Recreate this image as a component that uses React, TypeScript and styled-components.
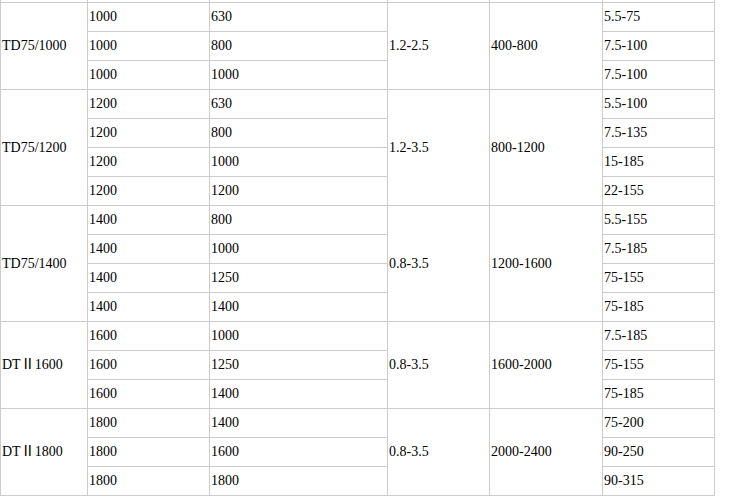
import React from "react";
import styled, { createGlobalStyle } from "styled-components";

const GlobalStyle = createGlobalStyle`
  html, body {
    margin: 0;
    padding: 0;
    background: #ffffff;
  }
  body {
    font-family: "Liberation Serif", "Noto Sans CJK SC", serif;
    font-size: 14px;
    color: #000000;
    overflow: hidden;
  }
`;

const Page = styled.div`
  width: 732px;
  height: 501px;
  overflow: hidden;
`;

const Table = styled.table`
  border-collapse: collapse;
  table-layout: fixed;
  width: 714px;
  margin-top: -27px;
  font-family: "Liberation Serif", "Noto Sans CJK SC", serif;
  font-size: 14px;
  color: #000;
`;

const Cell = styled.td`
  border: 1px solid #cccccc;
  padding: 0 1px;
  height: 28px;
  line-height: 16px;
  text-align: left;
  vertical-align: middle;
  white-space: nowrap;
`;

type Group = {
  model: string;
  speed: string;
  capacity: string;
  rows: [string, string, string][];
};

const groups: Group[] = [
  {
    model: "TD75/1000",
    speed: "1.2-2.5",
    capacity: "400-800",
    rows: [
      ["1000", "630", "5.5-75"],
      ["1000", "800", "7.5-100"],
      ["1000", "1000", "7.5-100"],
    ],
  },
  {
    model: "TD75/1200",
    speed: "1.2-3.5",
    capacity: "800-1200",
    rows: [
      ["1200", "630", "5.5-100"],
      ["1200", "800", "7.5-135"],
      ["1200", "1000", "15-185"],
      ["1200", "1200", "22-155"],
    ],
  },
  {
    model: "TD75/1400",
    speed: "0.8-3.5",
    capacity: "1200-1600",
    rows: [
      ["1400", "800", "5.5-155"],
      ["1400", "1000", "7.5-185"],
      ["1400", "1250", "75-155"],
      ["1400", "1400", "75-185"],
    ],
  },
  {
    model: "DTⅡ1600",
    speed: "0.8-3.5",
    capacity: "1600-2000",
    rows: [
      ["1600", "1000", "7.5-185"],
      ["1600", "1250", "75-155"],
      ["1600", "1400", "75-185"],
    ],
  },
  {
    model: "DTⅡ1800",
    speed: "0.8-3.5",
    capacity: "2000-2400",
    rows: [
      ["1800", "1400", "75-200"],
      ["1800", "1600", "90-250"],
      ["1800", "1800", "90-315"],
    ],
  },
];

const colWidths = [87, 122, 178, 102, 113, 112];

export default function App() {
  return (
    <Page>
      <GlobalStyle />
      <Table>
        <colgroup>
          {colWidths.map((w, i) => (
            <col key={i} style={{ width: w }} />
          ))}
        </colgroup>
        <tbody>
          <tr>
            <Cell />
            <Cell />
            <Cell />
            <Cell />
            <Cell />
            <Cell />
          </tr>
          {groups.map((g) =>
            g.rows.map((r, i) => (
              <tr key={g.model + i}>
                {i === 0 && <Cell rowSpan={g.rows.length}>{g.model}</Cell>}
                <Cell>{r[0]}</Cell>
                <Cell>{r[1]}</Cell>
                {i === 0 && <Cell rowSpan={g.rows.length}>{g.speed}</Cell>}
                {i === 0 && <Cell rowSpan={g.rows.length}>{g.capacity}</Cell>}
                <Cell>{r[2]}</Cell>
              </tr>
            ))
          )}
        </tbody>
      </Table>
    </Page>
  );
}
